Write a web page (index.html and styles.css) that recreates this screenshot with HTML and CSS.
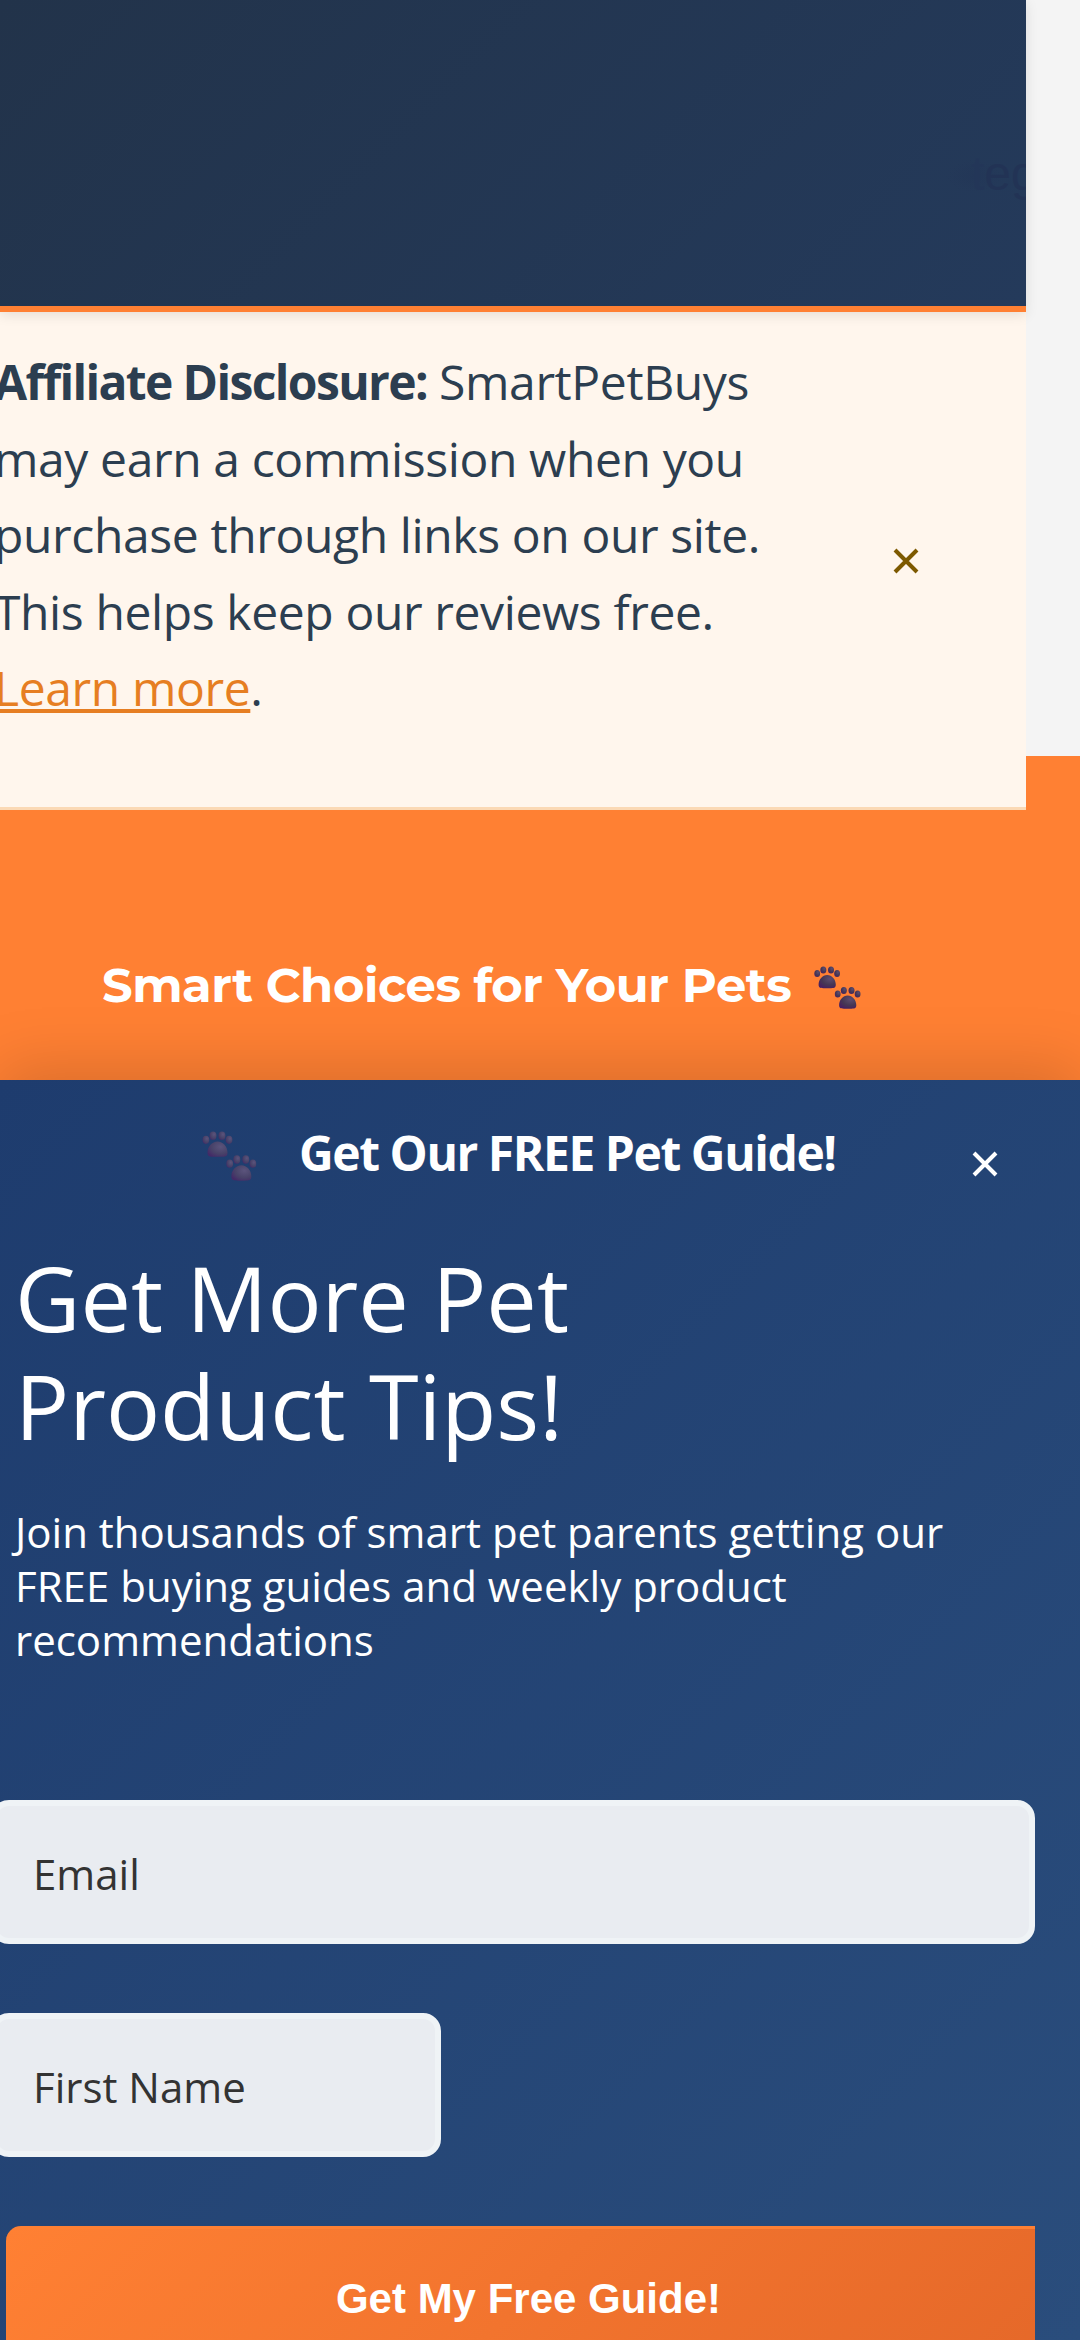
FILE: index.html
```html
<!DOCTYPE html>
<html lang="en">
<head>
<meta charset="utf-8">
<title>SmartPetBuys</title>
<link rel="stylesheet" href="styles.css">
</head>
<body>
<svg width="0" height="0" class="defs" aria-hidden="true">
  <defs>
    <radialGradient id="pad" cx=".65" cy=".3" r=".75"><stop offset="0" stop-color="#5d4c70"/><stop offset=".6" stop-color="#453754"/><stop offset="1" stop-color="#482060"/></radialGradient>
    <radialGradient id="pad-light" cx=".65" cy=".35" r=".75"><stop offset="0" stop-color="#66587f"/><stop offset=".6" stop-color="#504468"/><stop offset="1" stop-color="#4a2766"/></radialGradient>
    <g id="paw">
      <ellipse cx="3.2" cy="7.6" rx="2.9" ry="3.5"/>
      <ellipse cx="9.3" cy="4" rx="3" ry="3.6"/>
      <ellipse cx="17" cy="4" rx="3" ry="3.6"/>
      <ellipse cx="23.1" cy="7.6" rx="2.9" ry="3.5"/>
      <path d="M13.2 9C18 9 21.8 13.500 21.8 18.500C21.800 22.500 19.500 22.200 13.200 22.200C7 22.200 4.600 22.500 4.600 18.500C4.600 13.500 8.400 9 13.200 9Z"/>
    </g>
  </defs>
</svg>
<header class="header"><span class="nav-item"><span class="nav-fade">t</span>eg</span></header>
<section class="disclosure">
  <p class="disclosure-text"><strong class="label">Affiliate Disclosure:</strong> SmartPetBuys<br>may earn a commission when you<br>purchase through links on our site.<br>This helps keep our reviews free.<br><a class="learn" href="#">Learn more</a>.</p>
  <button class="close close-disclosure" aria-label="Dismiss"><svg viewBox="0 0 26 26" width="26" height="26"><path d="M2 2L24 24M24 2L2 24"/></svg></button>
</section>
<section class="hero">
  <h1 class="tagline"><span class="tagline-text">Smart Choices for Your Pets</span><svg class="tagline-paws" viewBox="0 0 47 43" width="47" height="43"><use href="#paw"/><use href="#paw" x="20.500" y="20.500"/></svg></h1>
</section>
<section class="popup">
  <div class="popup-head">
    <svg class="popup-paws" viewBox="0 0 47 43" width="55" height="50"><use href="#paw"/><use href="#paw" x="20.500" y="20.500"/></svg>
    <strong class="popup-title">Get Our FREE Pet Guide!</strong>
    <button class="close close-popup" aria-label="Close"><svg viewBox="0 0 26 26" width="26" height="26"><path d="M2 2L24 24M24 2L2 24"/></svg></button>
  </div>
  <h2 class="offer">Get More Pet<br>Product Tips!</h2>
  <p class="lead">Join thousands of smart pet parents getting our<br>FREE buying guides and weekly product<br>recommendations</p>
  <form class="form">
    <input class="field field-email" type="email" placeholder="Email">
    <input class="field field-name" type="text" placeholder="First Name">
    <button class="submit" type="button"><span class="submit-text">Get My Free Guide!</span></button>
  </form>
</section>
</body>
</html>
```
FILE: styles.css
```css
* { box-sizing: border-box; margin: 0; }
body {
  width: 1080px;
  height: 2340px;
  overflow: hidden;
  background: linear-gradient(#f4f4f4 756px, #ff8033 756px);
  font-family: "Open Sans", "Noto Sans", sans-serif;
}
.defs { display: block; height: 0; }
.header {
  position: relative;
  width: 1026px;
  height: 312px;
  border-bottom: 6px solid #ff8033;
  background: linear-gradient(135deg, #22334a, #243a5b);
  box-shadow: 0 3px 12px rgba(0, 0, 0, .1);
  z-index: 1;
  display: flex;
  justify-content: flex-end;
  align-items: flex-start;
  padding-top: 146px;
}
.nav-item {
  width: 80px;
  height: 56px;
  padding-left: 25px;
  overflow: hidden;
  font: 48px/56px "Liberation Sans", sans-serif;
  color: #223355;
  background: radial-gradient(ellipse at 28px 30px, #22345680, transparent 28px);
}
.nav-fade { color: #233658; }
.disclosure {
  width: 1026px;
  height: 498px;
  padding-top: 32px;
  border-bottom: 3px solid #fbd9b5;
  background: #fff6ed;
  color: #2c3e50;
  display: flex;
  justify-content: space-between;
}
.disclosure-text {
  margin-left: -6px;
  font-size: 48px;
  line-height: 76.5px;
  letter-spacing: -.38px;
  white-space: nowrap;
}
.label { letter-spacing: -1.63px; }
.learn { color: #e67e22; }
.close {
  padding: 0;
  border: 0;
  background: none;
  width: 26px;
  height: 26px;
  fill: none;
  stroke-width: 4;
}
.close svg { display: block; }
.close-disclosure { margin: 204px 107px 0 0; stroke: #7d5900; }
.hero {
  height: 270px;
  padding: 145px 0 0 102px;
  background: #ff8033;
}
.tagline {
  display: flex;
  align-items: flex-start;
  font: 700 48px/60px "Montserrat", "Inter", sans-serif;
  letter-spacing: -.45px;
  color: #fff;
  white-space: nowrap;
}
.tagline-text { width: 712px; }
.tagline-paws { margin-top: 11px; fill: url(#pad); }
.popup {
  position: relative;
  height: 1260px;
  background: linear-gradient(135deg, #1e3c6e, #2a4d7c);
  box-shadow: 0 -12px 60px rgba(0, 0, 0, .15);
  color: #fff;
  overflow: hidden;
}
.popup-head { height: 163px; display: flex; padding-left: 202px; }
.popup-paws { margin-top: 51px; opacity: .85; fill: url(#pad-light); }
.popup-title {
  width: 673px;
  margin: 40px 0 0 42px;
  font-size: 48px;
  line-height: 66px;
  letter-spacing: -1.45px;
  white-space: nowrap;
}
.close-popup { margin-top: 71px; stroke: #fff; }
.offer {
  padding-left: 15px;
  font-size: 90px;
  font-weight: 400;
  line-height: 108px;
  height: 254px;
}
.lead {
  padding-left: 15px;
  margin-top: 8px;
  font-size: 42px;
  line-height: 54px;
  height: 295px;
  white-space: nowrap;
}
.form { display: flex; flex-direction: column; align-items: flex-start; gap: 69px; }
.field {
  height: 144px;
  margin-left: -9px;
  padding: 7px 36px 5px;
  border: 6px solid #eff3f6;
  border-radius: 18px;
  background: #e9ecf1;
  font: 42px "Open Sans", sans-serif;
}
.field::placeholder { color: #333; opacity: 1; }
.field-email { width: 1044px; }
.field-name { width: 450px; }
.submit {
  width: 1029px;
  height: 150px;
  margin-left: 6px;
  padding: 0 0 8px 16px;
  border: 0;
  border-top: 3px solid #ff8033;
  border-radius: 15px 0 0 0;
  background: linear-gradient(135deg, #ff8033, #e56829);
  font: 700 42px "Liberation Sans", sans-serif;
  color: #fff;
}
```
